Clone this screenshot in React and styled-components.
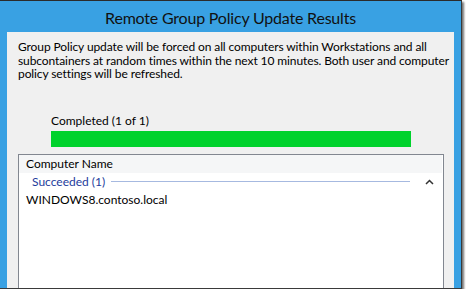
import React from 'react';
import styled, { createGlobalStyle } from 'styled-components';

const GlobalStyle = createGlobalStyle`
  html, body {
    margin: 0;
    padding: 0;
    background: #ffffff;
  }
  body {
    font-family: "Segoe UI", Lato, "Noto Sans", sans-serif;
  }
`;

const Window = styled.div`
  width: 462px;
  height: 289px;
  box-sizing: border-box;
  background: #39a1e3;
  border-top: 1px solid #2b2b2b;
  border-right: 1px solid #3a3a3a;
  border-bottom: 1px solid #3a3a3a;
  padding: 0 7px 0 7px;
  display: flex;
  flex-direction: column;
  box-shadow: 2px 2px 2px rgba(0, 0, 0, 0.55);
  overflow: hidden;
`;

const TitleBar = styled.div`
  height: 31px;
  flex: none;
  display: flex;
  align-items: center;
  justify-content: center;
  font-size: 16px;
  letter-spacing: -0.2px;
  color: #111;
  padding-top: 1px;
  box-sizing: border-box;
`;

const Body = styled.div`
  flex: 1;
  background: #f0f0f0;
  display: flex;
  flex-direction: column;
  padding: 8px 10px 0 11px;
  min-height: 0;
`;

const Description = styled.p`
  margin: 0;
  font-size: 12px;
  line-height: 13.5px;
  letter-spacing: -0.1px;
  white-space: nowrap;
  color: #000;
`;

const Progress = styled.div`
  margin: 33px 33px 0 33px;
  display: flex;
  flex-direction: column;
  gap: 3px;
`;

const ProgressLabel = styled.div`
  font-size: 12px;
  line-height: 14px;
  color: #000;
`;

const ProgressTrack = styled.div`
  height: 16px;
  background: #e6e6e6;
`;

const ProgressFill = styled.div`
  height: 100%;
  background: #00d22c;
`;

const List = styled.div`
  margin-top: 7px;
  flex: 1;
  border: 1px solid #828790;
  border-bottom: none;
  background: #fff;
  display: flex;
  flex-direction: column;
`;

const HeaderRow = styled.div`
  height: 18px;
  background: #f5f6f7;
  margin-right: 1px;
  display: flex;
  align-items: center;
  padding-left: 7px;
  font-size: 12px;
  color: #000;
`;

const GroupRow = styled.div`
  height: 18px;
  display: flex;
  align-items: center;
  padding-left: 13px;
  gap: 6px;
  font-size: 12px;
  color: #1e3c9c;
`;

const GroupLine = styled.div`
  flex: 1;
  height: 1px;
  background: #a6b9e0;
`;

const Chevron = styled.svg`
  width: 9px;
  height: 6px;
  margin: 0 9px 0 9px;
`;

const ItemRow = styled.div`
  height: 18px;
  display: flex;
  align-items: center;
  padding-left: 7px;
  font-size: 12px;
  color: #000;
`;

export default function App() {
  const done = 1;
  const total = 1;
  return (
    <>
      <GlobalStyle />
      <Window>
        <TitleBar>Remote Group Policy Update Results</TitleBar>
        <Body>
          <Description>
            Group Policy update will be forced on all computers within Workstations and all
            <br />
            subcontainers at random times within the next 10 minutes. Both user and computer
            <br />
            policy settings will be refreshed.
          </Description>
          <Progress>
            <ProgressLabel>Completed ({done} of {total})</ProgressLabel>
            <ProgressTrack>
              <ProgressFill style={{ width: `${(done / total) * 100}%` }} />
            </ProgressTrack>
          </Progress>
          <List>
            <HeaderRow>Computer Name</HeaderRow>
            <GroupRow>
              <span>Succeeded (1)</span>
              <GroupLine />
              <Chevron viewBox="0 0 9 6">
                <path d="M1 5 L4.5 1.5 L8 5" fill="none" stroke="#333" strokeWidth="1.5" />
              </Chevron>
            </GroupRow>
            <ItemRow>WINDOWS8.contoso.local</ItemRow>
          </List>
        </Body>
      </Window>
    </>
  );
}
